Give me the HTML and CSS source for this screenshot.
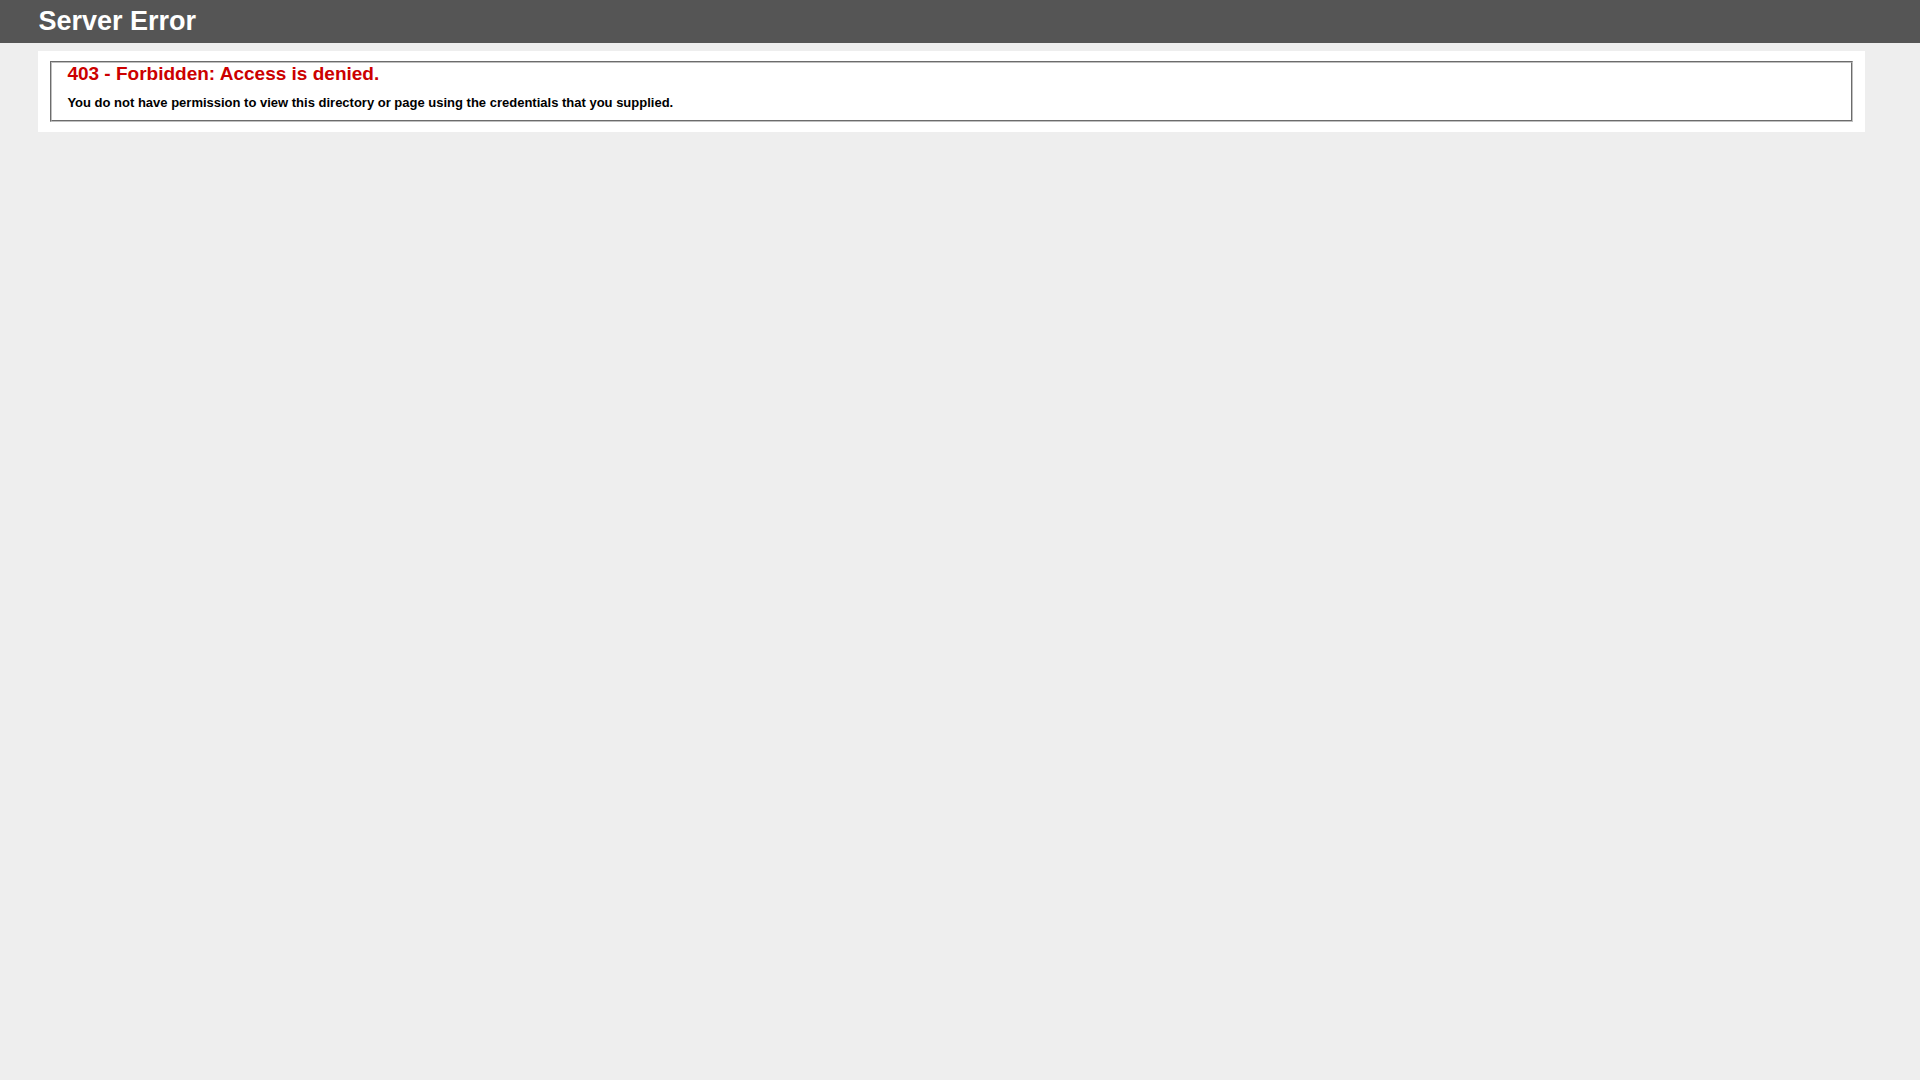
FILE: index.html
```html
<!DOCTYPE html>
<html lang="en">
<head>
<meta charset="utf-8">
<title>403 - Forbidden: Access is denied.</title>
<link rel="stylesheet" href="styles.css">
</head>
<body>
<header class="header"><h1>Server Error</h1></header>
<main class="content">
  <div class="content-container">
    <fieldset class="message">
      <h2>403 - Forbidden: Access is denied.</h2>
      <h3>You do not have permission to view this directory or page using the credentials that you supplied.</h3>
    </fieldset>
  </div>
</main>
</body>
</html>
```

FILE: styles.css
```css
body {
  margin: 0;
  font-family: Verdana, Arial, "Liberation Sans", Helvetica, sans-serif;
  font-size: 11px;
  background: #eeeeee;
}

.header {
  padding: 6px 2%;
  background-color: #555555;
  color: #ffffff;
}

.header h1 {
  margin: 0;
  font-size: 27px;
  line-height: 31px;
}

.content {
  margin: 0 0 0 2%;
}

.content-container {
  width: 96%;
  margin-top: 8px;
  padding: 10px;
  background: #ffffff;
}

.message {
  margin: 0 2px;
  padding: 0 15px 10px;
  border: 2px groove #c0c0c0;
}

.message h2 {
  margin: 0;
  font-size: 19px;
  line-height: 22px;
  color: #cc0000;
}

.message h3 {
  margin: 10px 0 0;
  font-size: 13px;
  line-height: 15px;
  color: #000000;
}
```
